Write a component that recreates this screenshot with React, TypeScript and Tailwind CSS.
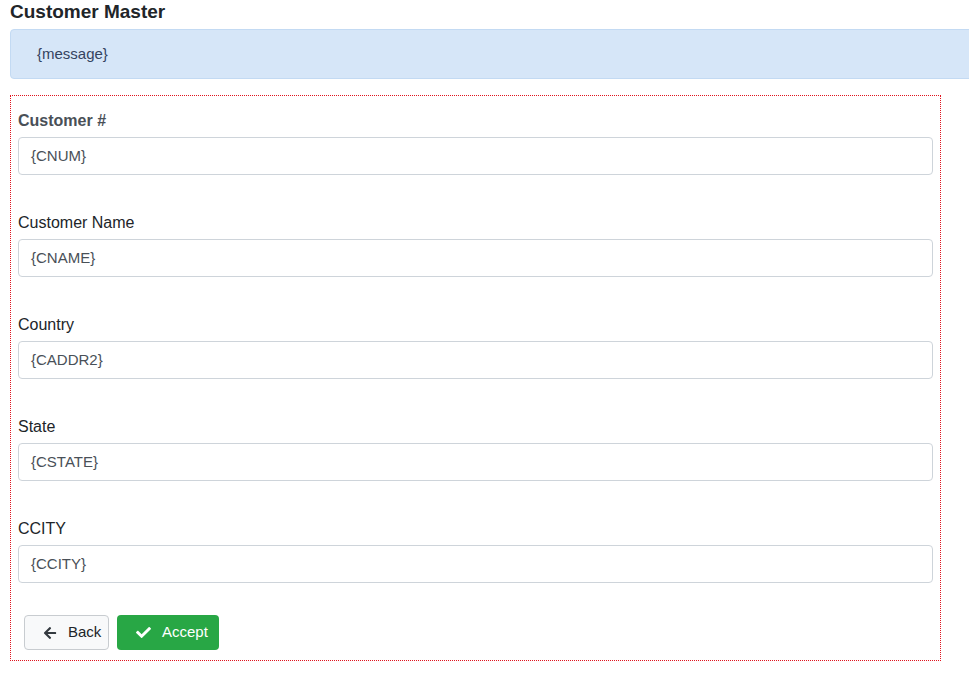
import { FaArrowLeft, FaCheck } from "react-icons/fa";

const fields = [
  { label: "Customer #", value: "{CNUM}", bold: true },
  { label: "Customer Name", value: "{CNAME}" },
  { label: "Country", value: "{CADDR2}" },
  { label: "State", value: "{CSTATE}" },
  { label: "CCITY", value: "{CCITY}" },
];

export default function App() {
  return (
    <div className="h-[673px] w-[969px] overflow-hidden bg-white text-[#212529] font-['Liberation_Sans',Arial,sans-serif]">
      <h1 className="pl-[10px] pt-[1px] text-[19px] leading-[22px] font-semibold">Customer Master</h1>

      <div className="ml-[10px] mt-[6px] h-[50px] w-[980px] rounded-[4px] border border-[#c3daf3] bg-[#d6e6f8] pl-[26px] flex items-center text-[15px] text-[#34435f]">
        {"{message}"}
      </div>

      <div className="ml-[10px] mt-[16px] w-[931px] border border-dotted border-[color:#e0141e] pl-[7px] pr-[7px] pt-[13px] pb-[10px]">
        {fields.map((f, i) => (
          <div key={f.label} className={i === 0 ? "" : "mt-[36px]"}>
            <label
              className={`block h-[24px] leading-[24px] text-[16px] mb-[4px] ${
                f.bold ? "font-bold text-[#495057] text-[15px]" : "text-[#212529]"
              }`}
            >
              {f.label}
            </label>
            <div className="h-[38px] rounded-[4px] border border-[#ced4da] px-[12px] flex items-center text-[15px] text-[#495057]">
              {f.value}
            </div>
          </div>
        ))}

        <div className="mt-[32px] ml-[6px] flex gap-[8px]">
          <button className="h-[35px] w-[85px] rounded-[4px] border border-[#c8ccd0] bg-[#f8f9fa] flex items-center pl-[18px] text-[15px] text-[#212529]">
            <FaArrowLeft className="h-[14px] w-[14px] text-[#343a40]" />
            <span className="ml-[11px]">Back</span>
          </button>
          <button className="h-[35px] w-[102px] rounded-[4px] bg-[#28a745] flex items-center pl-[19px] text-[15px] text-white">
            <FaCheck className="h-[15px] w-[15px]" />
            <span className="ml-[11px]">Accept</span>
          </button>
        </div>
      </div>
    </div>
  );
}
